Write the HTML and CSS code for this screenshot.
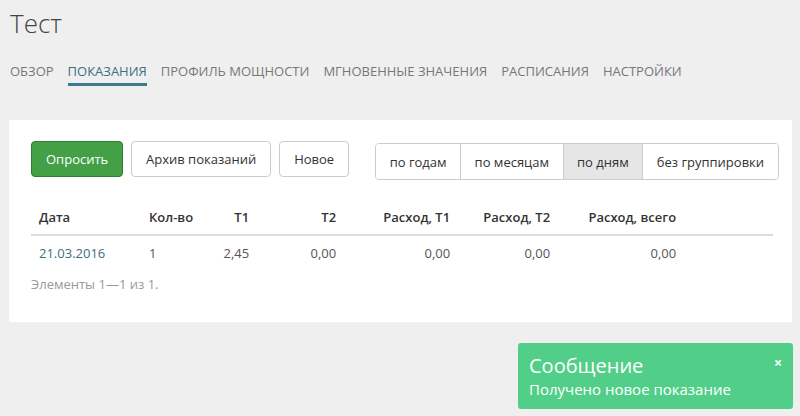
FILE: index.html
```html
<!DOCTYPE html>
<html lang="ru">

<head>
    <meta charset="UTF-8">
    <title>Тест</title>
    <link rel="stylesheet" href="styles.css">
</head>

<body>
    <h1 class="page-title">Тест</h1>

    <nav class="tabs">
        <a href="#">Обзор</a>
        <a href="#" class="active">Показания</a>
        <a href="#">Профиль мощности</a>
        <a href="#">Мгновенные значения</a>
        <a href="#">Расписания</a>
        <a href="#">Настройки</a>
    </nav>

    <div class="card">
        <div class="toolbar">
            <button class="btn btn-green">Опросить</button>
            <button class="btn">Архив показаний</button>
            <button class="btn">Новое</button>
            <div class="btn-group">
                <button>по годам</button>
                <button>по месяцам</button>
                <button class="active">по дням</button>
                <button>без группировки</button>
            </div>
        </div>

        <table class="grid">
            <thead>
                <tr>
                    <th class="c-date">Дата</th>
                    <th class="c-count">Кол-во</th>
                    <th class="num c-t1">Т1</th>
                    <th class="num c-t2">Т2</th>
                    <th class="num c-r1">Расход, Т1</th>
                    <th class="num c-r2">Расход, Т2</th>
                    <th class="num c-rall">Расход, всего</th>
                    <th></th>
                </tr>
            </thead>
            <tbody>
                <tr>
                    <td><a href="#">21.03.2016</a></td>
                    <td>1</td>
                    <td class="num">2,45</td>
                    <td class="num">0,00</td>
                    <td class="num">0,00</td>
                    <td class="num">0,00</td>
                    <td class="num">0,00</td>
                    <td></td>
                </tr>
            </tbody>
        </table>
        <div class="summary">Элементы 1—1 из 1.</div>
    </div>

    <div class="toast">
        <span class="toast-close">×</span>
        <div class="toast-title">Сообщение</div>
        <div class="toast-text">Получено новое показание</div>
    </div>
</body>

</html>
```

FILE: styles.css
```css
* {
    margin: 0;
    padding: 0;
    box-sizing: border-box;
}

body {
    font-family: "Open Sans", Arial, sans-serif;
    font-size: 13px;
    color: #333;
    background-color: #efefef;
    padding: 0 8px 0 9px;
    height: 416px;
    overflow: hidden;
    position: relative;
}

.page-title {
    font-size: 26px;
    font-weight: 300;
    color: #444;
    line-height: 36px;
    padding-top: 5px;
    margin-left: 1px;
}

.tabs {
    display: flex;
    gap: 14px;
    margin-top: 21px;
    margin-left: 1px;
}

.tabs a {
    text-transform: uppercase;
    text-decoration: none;
    color: #777;
    font-size: 13px;
    line-height: 18px;
    padding-bottom: 3px;
    border-bottom: 3px solid transparent;
}

.tabs a.active {
    color: #3b6f80;
    border-bottom-color: #3d7a8c;
}

.card {
    background-color: #fff;
    margin-top: 34px;
    height: 202px;
    padding: 21px 19px 0 22px;
}

.toolbar {
    display: flex;
    align-items: flex-start;
}

.btn {
    font-family: inherit;
    font-size: 13px;
    height: 36px;
    padding: 0 14px;
    color: #333;
    background-color: #fff;
    border: 1px solid #ccc;
    border-radius: 4px;
    margin-right: 8px;
    white-space: nowrap;
    flex-shrink: 0;
}

.btn-green {
    width: 92px;
    background-color: #43a047;
    border-color: #2f7d33;
    color: #fff;
}

.btn-group {
    display: flex;
    flex-shrink: 0;
    margin-left: 18px;
    margin-top: 2px;
    border: 1px solid #ccc;
    border-radius: 4px;
    overflow: hidden;
}

.btn-group button {
    font-family: inherit;
    font-size: 13px;
    height: 35px;
    padding: 0 13.5px;
    color: #333;
    background-color: #fff;
    border: none;
    border-left: 1px solid #ccc;
    white-space: nowrap;
}

.btn-group button:first-child {
    border-left: none;
}

.btn-group button.active {
    background-color: #e6e6e6;
}

.grid {
    width: 742px;
    border-collapse: collapse;
    margin-top: 19px;
}

.grid th,
.grid td {
    padding: 0 8px;
    text-align: left;
    white-space: nowrap;
}

.grid th {
    font-weight: 600;
    height: 36px;
    border-bottom: 2px solid #ddd;
    color: #333;
}

.grid td {
    height: 35px;
    color: #555;
}

.grid .num {
    text-align: right;
}

.c-date { width: 110px; }
.c-count { width: 60px; }
.c-t1 { width: 56px; }
.c-t2 { width: 87px; }
.c-r1 { width: 114px; }
.c-r2 { width: 100px; }
.c-rall { width: 126px; }

.grid a {
    color: #3b6f80;
    text-decoration: none;
}

.summary {
    color: #999;
    margin-top: 5px;
}

.toast {
    position: absolute;
    left: 518px;
    top: 343px;
    width: 275px;
    height: 66px;
    background-color: #51cf88;
    color: #fff;
    border-radius: 3px;
    padding: 9px 11px;
}

.toast-title {
    font-size: 20px;
    line-height: 27px;
}

.toast-text {
    font-size: 15px;
    line-height: 20px;
}

.toast-close {
    position: absolute;
    right: 11px;
    top: 10px;
    font-size: 14px;
    font-weight: 700;
}
```
